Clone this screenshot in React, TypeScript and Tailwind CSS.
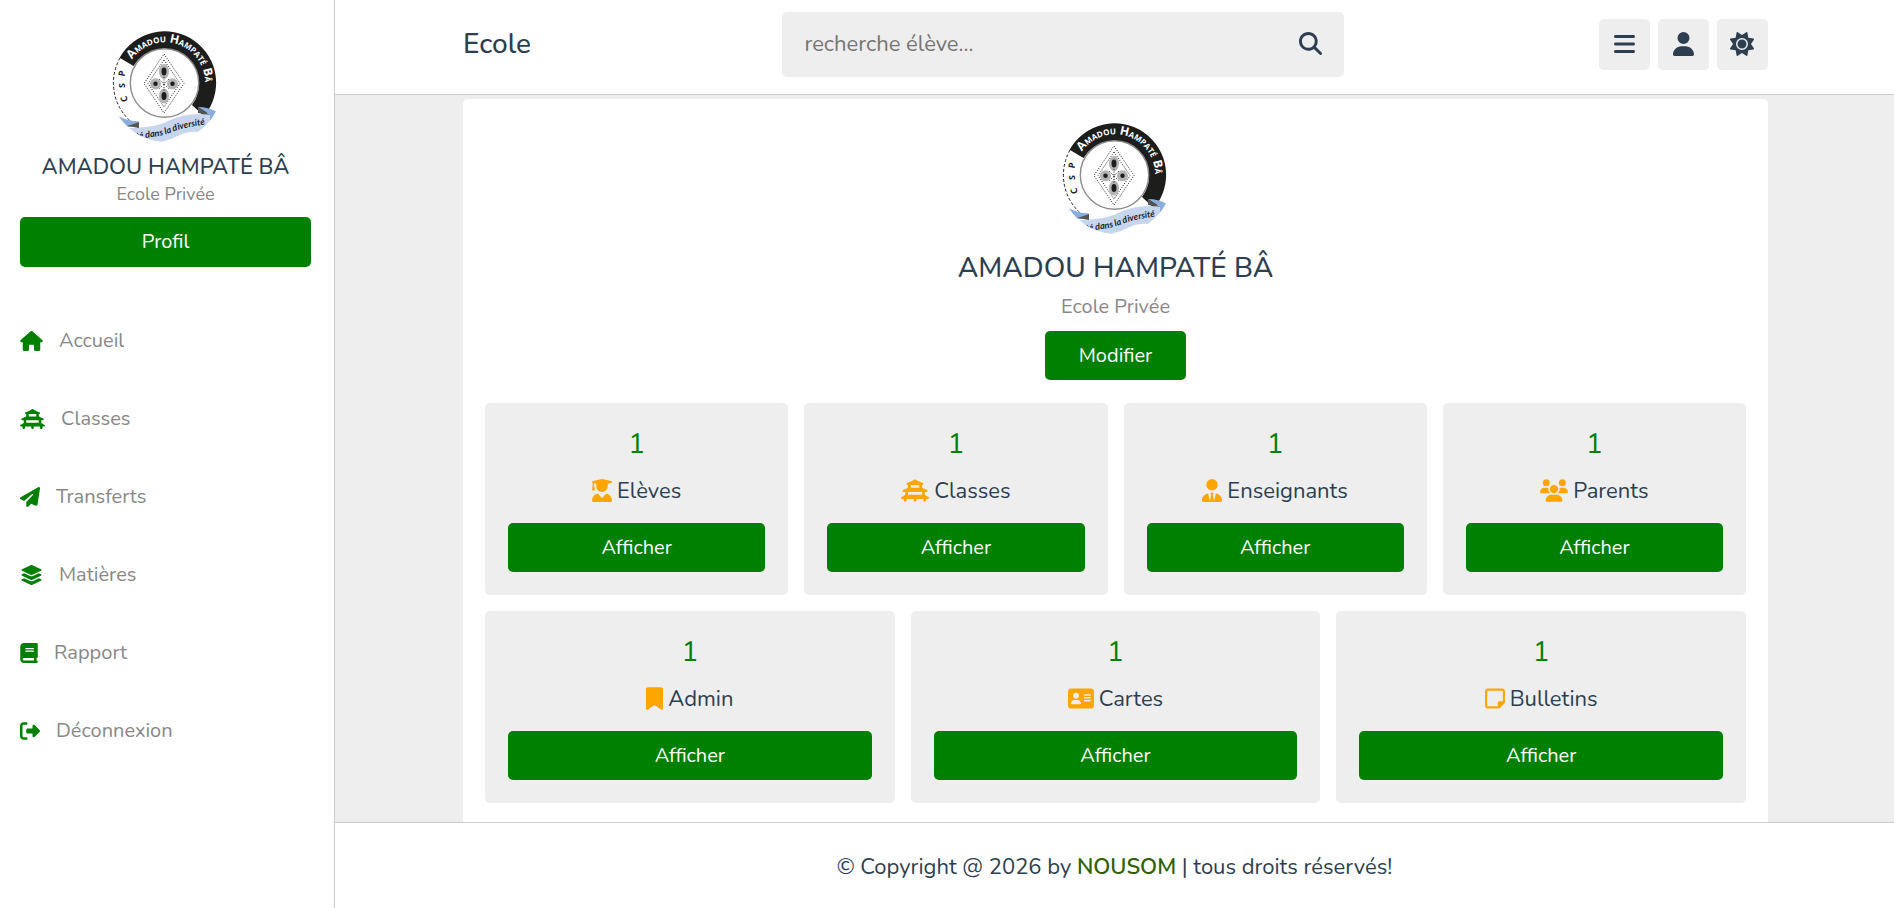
import { useState } from 'react';
import type { IconType } from 'react-icons';
import {
  FaAddressCard,
  FaBars,
  FaBook,
  FaBookmark,
  FaHouse,
  FaLayerGroup,
  FaMagnifyingGlass,
  FaPaperPlane,
  FaRegNoteSticky,
  FaRightFromBracket,
  FaSun,
  FaUser,
  FaUserGraduate,
  FaUsers,
  FaUserTie,
  FaVihara,
} from 'react-icons/fa6';

const SCHOOL_NAME = 'AMADOU HAMPATÉ BÂ';
const SCHOOL_TYPE = 'Ecole Privée';

// react-icons draws in a square box, so each item gives the width of its glyph
type Item = { label: string; icon: IconType; width: string };

const navItems: Item[] = [
  { label: 'Accueil', icon: FaHouse, width: 'w-[23px]' },
  { label: 'Classes', icon: FaVihara, width: 'w-[25px]' },
  { label: 'Transferts', icon: FaPaperPlane, width: 'w-5' },
  { label: 'Matières', icon: FaLayerGroup, width: 'w-[23px]' },
  { label: 'Rapport', icon: FaBook, width: 'w-[18px]' },
  { label: 'Déconnexion', icon: FaRightFromBracket, width: 'w-5' },
];

const people: Item[] = [
  { label: 'Elèves', icon: FaUserGraduate, width: 'w-5' },
  { label: 'Classes', icon: FaVihara, width: 'w-7' },
  { label: 'Enseignants', icon: FaUserTie, width: 'w-5' },
  { label: 'Parents', icon: FaUsers, width: 'w-7' },
];

const documents: Item[] = [
  { label: 'Admin', icon: FaBookmark, width: 'w-[17px]' },
  { label: 'Cartes', icon: FaAddressCard, width: 'w-[26px]' },
  { label: 'Bulletins', icon: FaRegNoteSticky, width: 'w-5' },
];

// Round school crest, id keeps the clip and text paths unique per instance
const Logo = ({ id }: { id: string }) => (
  <svg viewBox="0 0 112 112" className="w-28 h-28" role="img" aria-label={SCHOOL_NAME}>
    <defs>
      <clipPath id={`${id}-clip`}>
        <circle cx="56" cy="56" r="56" />
      </clipPath>
      <path id={`${id}-name`} d="M22 29.7 A40 40 0 1 1 88 75" />
      <path id={`${id}-motto`} d="M26 109 Q50 107 62 102 T106 93" />
    </defs>
    <g clipPath={`url(#${id}-clip)`}>
      <path d="M9.6 27.8 A51.5 51.5 0 1 1 94 86 L82 75 A35.2 35.2 0 1 0 23.5 36 Z" fill="#1d1d1b" />
      <path d="M10 28 A51 51 0 0 0 22 92.5" fill="none" stroke="#1d1d1b" strokeWidth="1" strokeDasharray="3 2" />
      <circle cx="54.5" cy="53" r="34.2" fill="#fff" stroke="#8c8c8c" strokeWidth="1.4" />

      <g className="font-['Open_Sans',sans-serif]" fill="#fff" fontSize="12" fontWeight="700" style={{ fontVariant: 'small-caps' }}>
        <text>
          <textPath href={`#${id}-name`}>Amadou Hampaté Bâ</textPath>
        </text>
      </g>
      <g className="font-['Open_Sans',sans-serif]" fill="#1d1d1b" fontSize="9" fontWeight="700" textAnchor="middle">
        <text transform="translate(17 68) rotate(-108)">C</text>
        <text transform="translate(15 55.5) rotate(-90)">S</text>
        <text transform="translate(15 44) rotate(-80)">P</text>
      </g>

      <g fill="none" stroke="#1d1d1b" strokeWidth="1" strokeDasharray="1 1.5">
        <path d="M54 24 L74 53.5 L54 83 L34 53.5 Z" />
        <path d="M54 30 L70 53.5 L54 77 L38 53.5 Z" />
      </g>
      <g fill="#b4b4b4">
        <ellipse cx="54" cy="41.5" rx="5" ry="7.5" />
        <ellipse cx="54" cy="66" rx="5" ry="7.5" />
        <circle cx="45.5" cy="53.8" r="5.5" />
        <circle cx="62.5" cy="53.8" r="5.5" />
      </g>
      <path d="M49 49 L59 59 M59 49 L49 59 M54 47 V61" stroke="#1d1d1b" strokeWidth="1" strokeDasharray="1 1.5" />
      <g fill="#1d1d1b">
        <ellipse cx="54" cy="41.5" rx="2.5" ry="4" />
        <ellipse cx="54" cy="66" rx="2.5" ry="4" />
        <circle cx="45.5" cy="53.8" r="2.2" />
        <circle cx="62.5" cy="53.8" r="2.2" />
      </g>

      <path d="M8 86 Q18 91 29 91.5 L29 97 L17 97 Z" fill="#8badde" />
      <path d="M88 77 Q98 77 107 82 L100 91 L99 84 Z" fill="#8badde" />
      <path
        d="M17 98 Q45 98 58 91 Q76 82 100 84.5 L100 91 L89 102 Q78 101 70 105 Q60 110 51 112 Q34 111 17 98 Z"
        fill="#c7d5ef"
      />
      <path d="M17.5 96 L29 92 V98 Z" fill="#555" />
      <path d="M88 77 L100 85 L88 83 Z" fill="#555" />
      <text className="font-['Lato',sans-serif]" fill="#1d1d1b" fontSize="9" fontWeight="700" fontStyle="italic">
        <textPath href={`#${id}-motto`}>té dans la diversité</textPath>
      </text>
    </g>
  </svg>
);

const StatCard = ({ label, icon: Icon, width }: Item) => (
  <div className="flex flex-col items-center rounded-[5px] bg-[#eee] px-[23px] pt-5 pb-[23px]">
    <span className="text-[28px] leading-[42px] text-[#008000]">1</span>
    <p className="flex items-center gap-[5px] text-[22px] leading-[52px] text-[#2c3e50]">
      <Icon className={`mb-0.5 h-[23px] text-[#ffa500] ${width}`} />
      {label}
    </p>
    <button type="button" className="mt-[6px] h-[49px] w-full rounded-[5px] bg-[#008000] text-[20px] text-white">
      Afficher
    </button>
  </div>
);

const Sidebar = () => (
  <aside className="flex w-[335px] shrink-0 flex-col border-r border-[#ccc] bg-white pl-5 pr-[23px] pt-[30px]">
    <div className="flex flex-col items-center">
      <Logo id="side" />
      <h3 className="mt-[7px] text-[22px] leading-[36px] font-medium text-[#2c3e50]">{SCHOOL_NAME}</h3>
      <p className="text-[18px] leading-[18px] text-[#888]">{SCHOOL_TYPE}</p>
      <button type="button" className="mt-[14px] h-[50px] w-full rounded-[5px] bg-[#008000] text-[20px] text-white">
        Profil
      </button>
    </div>
    <nav className="mt-[35px] flex flex-col">
      {navItems.map(({ label, icon: Icon, width }) => (
        <a key={label} href="#" className="flex h-[78px] items-center gap-4 text-[20px] text-[#888]">
          <Icon className={`h-5 text-[#008000] ${width}`} />
          {label}
        </a>
      ))}
    </nav>
  </aside>
);

const Header = () => {
  const [query, setQuery] = useState('');

  return (
    <header className="flex items-center justify-between border-b border-[#ccc] bg-white pl-32 pr-[126px] pt-3 pb-[17px]">
      <a href="#" className="pb-0.5 text-[28px] leading-[42px] font-medium text-[#2c3e50]">
        Ecole
      </a>
      <form className="mr-1 flex h-[65px] w-[43%] items-center rounded-[5px] bg-[#eee] px-[22px]" onSubmit={(e) => e.preventDefault()}>
        <input
          type="text"
          aria-label="recherche élève"
          placeholder="recherche élève..."
          value={query}
          onChange={(e) => setQuery(e.target.value)}
          className="min-w-0 flex-1 bg-transparent text-[22px] text-[#2c3e50] outline-none placeholder:text-[#757575]"
        />
        <button type="submit" aria-label="Rechercher" className="pb-0.5 text-[#2c3e50]">
          <FaMagnifyingGlass className="h-[23px] w-[23px]" />
        </button>
      </form>
      <div className="flex gap-2 text-[#2c3e50]">
        <button type="button" aria-label="Menu" className="flex h-[51px] w-[51px] items-center justify-center rounded-[5px] bg-[#eee] pb-0.5">
          <FaBars className="h-6 w-[21px]" />
        </button>
        <button type="button" aria-label="Profil" className="flex h-[51px] w-[51px] items-center justify-center rounded-[5px] bg-[#eee] pb-0.5">
          <FaUser className="h-6 w-[21px]" />
        </button>
        <button type="button" aria-label="Thème" className="flex h-[51px] w-[51px] items-center justify-center rounded-[5px] bg-[#eee] pb-0.5">
          <FaSun className="h-6 w-6" />
        </button>
      </div>
    </header>
  );
};

export default function App() {
  return (
    <div className="flex min-h-screen bg-[#eee] font-['Nunito','Lato',sans-serif]">
      <Sidebar />
      <div className="flex min-w-0 flex-1 flex-col">
        <Header />
        <main className="flex flex-1 flex-col pl-32 pr-[126px] pt-1">
          <section className="flex-1 rounded-t-[5px] bg-white px-[22px] pt-[23px] pb-[19px]">
            <div className="flex flex-col items-center">
              <Logo id="main" />
              <h1 className="mt-3 text-[28px] leading-[44px] font-medium text-[#2c3e50]">{SCHOOL_NAME}</h1>
              <p className="text-[20px] leading-[34px] text-[#888]">{SCHOOL_TYPE}</p>
              <button type="button" className="mt-[7px] h-[49px] rounded-[5px] bg-[#008000] px-[34px] text-[20px] text-white">
                Modifier
              </button>
            </div>
            <div className="mt-[23px] grid grid-cols-4 gap-4">
              {people.map((item) => (
                <StatCard key={item.label} {...item} />
              ))}
            </div>
            <div className="mt-4 grid grid-cols-3 gap-4">
              {documents.map((item) => (
                <StatCard key={item.label} {...item} />
              ))}
            </div>
          </section>
        </main>
        <footer className="flex h-[86px] items-center justify-center border-t border-[#ccc] bg-white pt-[3px] text-[22px] text-[#2c3e50]">
          <p>
            © Copyright @ 2026 by <span className="font-semibold text-[#306000]">NOUSOM</span> | tous droits réservés!
          </p>
        </footer>
      </div>
    </div>
  );
}
